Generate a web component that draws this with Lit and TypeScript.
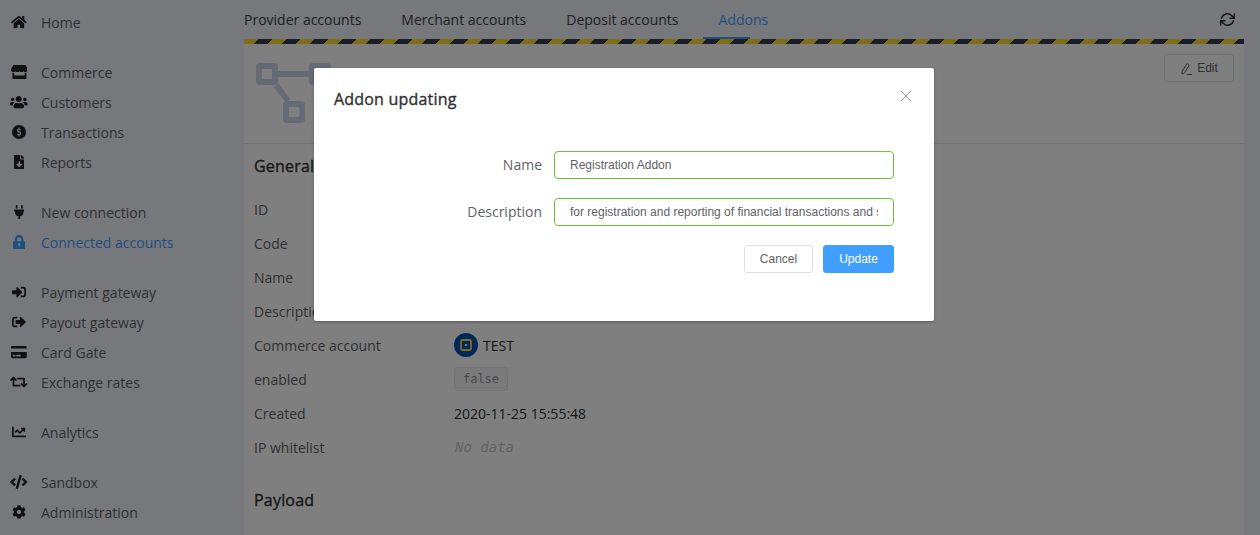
import { LitElement, html, css, svg } from "lit";
import { customElement } from "lit/decorators.js";

const ICONS: Record<string, [number, string]> = {
  home: [576, "M280.37 148.26L96 300.11V464a16 16 0 0 0 16 16l112.06-.29a16 16 0 0 0 15.92-16V368a16 16 0 0 1 16-16h64a16 16 0 0 1 16 16v95.64a16 16 0 0 0 16 16.05L464 480a16 16 0 0 0 16-16V300L295.67 148.26a12.19 12.19 0 0 0-15.3 0zM571.6 251.47L488 182.56V44.05a12 12 0 0 0-12-12h-56a12 12 0 0 0-12 12v72.61L318.47 43a48 48 0 0 0-61 0L4.34 251.47a12 12 0 0 0-1.6 16.9l25.5 31A12 12 0 0 0 45.15 301l235.22-193.74a12.19 12.19 0 0 1 15.3 0L530.9 301a12 12 0 0 0 16.9-1.6l25.5-31a12 12 0 0 0-1.7-16.93z"],
  store: [616, "M602 118.6L537.1 15C531.3 5.7 521 0 510 0H106C95 0 84.7 5.7 78.9 15L14 118.6c-33.9 54.1-3.9 129.3 59.4 137.9 4.6.6 9.2.9 13.7.9 29.9 0 56.4-13.1 74.6-33.4 18.2 20.3 44.8 33.4 74.6 33.4 29.9 0 56.4-13.1 74.6-33.4 18.2 20.3 44.8 33.4 74.6 33.4 29.9 0 56.4-13.1 74.6-33.4 18.3 20.3 44.8 33.4 74.6 33.4 4.6 0 9.1-.3 13.7-.9 63.5-8.5 93.5-83.7 59.6-137.9zM529.5 288c-10 0-19.9-1.5-29.5-3.8V384H116v-99.8c-9.6 2.2-19.5 3.8-29.5 3.8-6 0-12.1-.4-18-1.2-5.6-.8-11.1-2.1-16.4-3.6V480c0 17.7 14.3 32 32 32h448c17.7 0 32-14.3 32-32V283.2c-5.4 1.6-10.8 2.9-16.4 3.6-6.1.8-12.1 1.2-18.2 1.2z"],
  users: [640, "M96 224c35.3 0 64-28.7 64-64s-28.7-64-64-64-64 28.7-64 64 28.7 64 64 64zm448 0c35.3 0 64-28.7 64-64s-28.7-64-64-64-64 28.7-64 64 28.7 64 64 64zm32 32h-64c-17.6 0-33.5 7.1-45.1 18.6 40.3 22.1 68.9 62 75.1 109.4h66c17.7 0 32-14.3 32-32v-32c0-35.3-28.7-64-64-64zm-256 0c61.9 0 112-50.1 112-112S381.9 32 320 32 208 82.1 208 144s50.1 112 112 112zm76.8 32h-8.3c-20.8 10-43.9 16-68.5 16s-47.6-6-68.5-16h-8.3C179.6 288 128 339.6 128 403.2V432c0 26.5 21.5 48 48 48h288c26.5 0 48-21.5 48-48v-28.8c0-63.6-51.6-115.2-115.2-115.2zm-223.7-13.4C161.5 263.1 145.6 256 128 256H64c-35.3 0-64 28.7-64 64v32c0 17.7 14.3 32 32 32h65.9c6.3-47.4 34.9-87.3 75.2-109.4z"],
  file: [384, "M224 136V0H24C10.7 0 0 10.7 0 24v464c0 13.3 10.7 24 24 24h336c13.3 0 24-10.7 24-24V160H248c-13.2 0-24-10.8-24-24zm76.45 211.36l-96.42 95.7c-6.65 6.61-17.39 6.61-24.04 0l-96.42-95.7C73.42 337.29 80.54 320 94.82 320H160v-80c0-8.84 7.16-16 16-16h32c8.84 0 16 7.16 16 16v80h65.18c14.28 0 21.4 17.29 11.27 27.36zM377 105L279.1 7c-4.5-4.5-10.6-7-17-7H256v128h128v-6.1c0-6.3-2.5-12.4-7-16.9z"],
  plug: [384, "M320,32a32,32,0,0,0-64,0v96h64Zm48,128H16A16,16,0,0,0,0,176v32a16,16,0,0,0,16,16H32v32A160.07,160.07,0,0,0,160,412.8V512h64V412.8A160.07,160.07,0,0,0,352,256V224h16a16,16,0,0,0,16-16V176A16,16,0,0,0,368,160ZM128,32a32,32,0,0,0-64,0v96h64Z"],
  lock: [448, "M400 224h-24v-72C376 68.2 307.8 0 224 0S72 68.2 72 152v72H48c-26.5 0-48 21.5-48 48v192c0 26.5 21.5 48 48 48h352c26.5 0 48-21.5 48-48V272c0-26.5-21.5-48-48-48zm-104 0H152v-72c0-39.7 32.3-72 72-72s72 32.3 72 72v72zM224 300a44 44 0 0 0-24 81v35h48v-35a44 44 0 0 0-24-81z"],
  signin: [512, "M416 448h-84c-6.6 0-12-5.4-12-12v-40c0-6.6 5.4-12 12-12h84c17.7 0 32-14.3 32-32V160c0-17.7-14.3-32-32-32h-84c-6.6 0-12-5.4-12-12V76c0-6.6 5.4-12 12-12h84c53 0 96 43 96 96v192c0 53-43 96-96 96zm-47-201L201 79c-15-15-41-4.5-41 17v96H24c-13.3 0-24 10.7-24 24v96c0 13.3 10.7 24 24 24h136v96c0 21.5 26 32 41 17l168-168c9.3-9.4 9.3-24.6 0-34z"],
  signout: [512, "M497 273L329 441c-15 15-41 4.5-41-17v-96H152c-13.3 0-24-10.7-24-24v-96c0-13.3 10.7-24 24-24h136V88c0-21.4 25.9-32 41-17l168 168c9.3 9.4 9.3 24.6 0 34zM192 436v-40c0-6.6-5.4-12-12-12H96c-17.7 0-32-14.3-32-32V160c0-17.7 14.3-32 32-32h84c6.6 0 12-5.4 12-12V76c0-6.6-5.4-12-12-12H96c-53 0-96 43-96 96v192c0 53 43 96 96 96h84c6.6 0 12-5.4 12-12z"],
  card: [576, "M0 432c0 26.5 21.5 48 48 48h480c26.5 0 48-21.5 48-48V256H0v176zm192-68c0-6.6 5.4-12 12-12h136c6.6 0 12 5.4 12 12v40c0 6.6-5.4 12-12 12H204c-6.6 0-12-5.4-12-12v-40zm-128 0c0-6.6 5.4-12 12-12h72c6.6 0 12 5.4 12 12v40c0 6.6-5.4 12-12 12H76c-6.6 0-12-5.4-12-12v-40zM576 80v48H0V80c0-26.5 21.5-48 48-48h480c26.5 0 48 21.5 48 48z"],
  retweet: [640, "M629.657 343.598L528.971 444.284c-9.373 9.372-24.568 9.372-33.941 0L394.343 343.598c-9.373-9.373-9.373-24.569 0-33.941l10.823-10.823c9.562-9.562 25.133-9.34 34.419.492L480 342.118V160H292.451a24.005 24.005 0 0 1-16.971-7.029l-16-16C244.361 121.851 255.069 96 276.451 96H520c13.255 0 24 10.745 24 24v222.118l40.416-42.792c9.285-9.831 24.856-10.054 34.419-.492l10.823 10.823c9.372 9.372 9.372 24.569-.001 33.941zm-265.138 15.431A23.999 23.999 0 0 0 347.548 352H160V169.881l40.416 42.792c9.286 9.831 24.856 10.054 34.419.491l10.822-10.822c9.373-9.373 9.373-24.569 0-33.941L144.971 67.716c-9.373-9.373-24.569-9.373-33.941 0L10.343 168.402c-9.373 9.373-9.373 24.569 0 33.941l10.822 10.822c9.562 9.562 25.133 9.34 34.419-.491L96 169.881V392c0 13.255 10.745 24 24 24h243.549c21.382 0 32.09-25.851 16.971-40.971l-16.001-16z"],
  chart: [512, "M496 384H64V80c0-8.84-7.16-16-16-16H16C7.16 64 0 71.16 0 80v336c0 17.67 14.33 32 32 32h464c8.84 0 16-7.16 16-16v-32c0-8.84-7.16-16-16-16zM464 96H345.94c-21.38 0-32.09 25.85-16.97 40.97l32.4 32.4L288 242.75l-73.37-73.37c-12.5-12.5-32.76-12.5-45.25 0l-68.69 68.69c-6.25 6.25-6.25 16.38 0 22.63l22.62 22.62c6.25 6.25 16.38 6.25 22.63 0L192 237.25l73.37 73.37c12.5 12.5 32.76 12.5 45.25 0l96-96 32.4 32.4c15.12 15.12 40.97 4.41 40.97-16.97V112c.01-8.84-7.15-16-16-16z"],
  code: [640, "M278.9 511.5l-61-17.7c-6.4-1.8-10-8.5-8.2-14.9L346.2 8.7c1.8-6.4 8.5-10 14.9-8.2l61 17.7c6.4 1.8 10 8.5 8.2 14.9L293.8 503.3c-1.9 6.4-8.5 10.1-14.9 8.2zm-114-112.2l43.5-46.4c4.6-4.9 4.3-12.7-.8-17.2L117 256l90.6-79.7c5.1-4.5 5.5-12.3.8-17.2l-43.5-46.4c-4.5-4.8-12.1-5.1-17-.5L3.8 247.2c-5.1 4.7-5.1 12.8 0 17.5l144.1 135.1c4.9 4.6 12.5 4.4 17-.5zm327.2.6l144.1-135.1c5.1-4.7 5.1-12.8 0-17.5L492.1 112.1c-4.8-4.5-12.4-4.3-17 .5L431.6 159c-4.6 4.9-4.3 12.7.8 17.2L523 256l-90.6 79.7c-5.1 4.5-5.5 12.3-.8 17.2l43.5 46.4c4.5 4.9 12.1 5.1 17 .6z"],
  cog: [512, "M487.4 315.7l-42.6-24.6c4.3-23.2 4.3-47 0-70.2l42.6-24.6c4.9-2.8 7.1-8.6 5.5-14-11.1-35.6-30-67.8-54.7-94.6-3.8-4.1-10-5.1-14.8-2.3L380.8 110c-17.9-15.4-38.5-27.3-60.8-35.1V25.8c0-5.6-3.9-10.5-9.4-11.7-36.7-8.2-74.3-7.8-109.2 0-5.5 1.2-9.4 6.1-9.4 11.7V75c-22.2 7.9-42.8 19.8-60.8 35.1L88.7 85.5c-4.9-2.8-11-1.9-14.8 2.3-24.7 26.7-43.6 58.9-54.7 94.6-1.7 5.4.6 11.2 5.5 14L67.3 221c-4.3 23.2-4.3 47 0 70.2l-42.6 24.6c-4.9 2.8-7.1 8.6-5.5 14 11.1 35.6 30 67.8 54.7 94.6 3.8 4.1 10 5.1 14.8 2.3l42.6-24.6c17.9 15.4 38.5 27.3 60.8 35.1v49.2c0 5.6 3.9 10.5 9.4 11.7 36.7 8.2 74.3 7.8 109.2 0 5.5-1.2 9.4-6.1 9.4-11.7v-49.2c22.2-7.9 42.8-19.8 60.8-35.1l42.6 24.6c4.9 2.8 11 1.9 14.8-2.3 24.7-26.7 43.6-58.9 54.7-94.6 1.5-5.5-.7-11.3-5.6-14.1zM256 336c-44.1 0-80-35.9-80-80s35.9-80 80-80 80 35.9 80 80-35.9 80-80 80z"],
};

const DOLLAR =
  "M209.2 233.4l-108-31.6C88.7 198.2 80 186.5 80 173.5c0-16.3 13.2-29.5 29.5-29.5h66.3c12.2 0 24.2 3.7 34.2 10.5 6.1 4.1 14.3 3.1 19.5-2l34.8-34c7.1-6.9 6.1-18.4-1.8-24.5C238 74.8 207.4 64.1 176 64V16c0-8.8-7.2-16-16-16h-32c-8.8 0-16 7.2-16 16v48h-2.5C45.8 64-5.4 118.7.5 183.6c4.2 46.1 39.4 83.6 83.8 96.6l102.5 30c12.5 3.7 21.2 15.3 21.2 28.3 0 16.3-13.2 29.5-29.5 29.5h-66.3C100 368 88 364.3 78 357.5c-6.1-4.1-14.3-3.1-19.5 2l-34.8 34c-7.1 6.9-6.1 18.4 1.8 24.5 24.5 19.2 55.1 29.9 86.5 30v48c0 8.8 7.2 16 16 16h32c8.8 0 16-7.2 16-16v-48.2c46.6-.9 90.3-28.6 105.7-72.7 21.5-61.6-14.6-124.8-72.5-141.7z";

const icon = (name: string) => {
  if (name === "dollar") {
    return html`<svg class="ic" width="14" height="14" viewBox="0 0 496 496">
      <circle cx="248" cy="248" r="248" fill="currentColor"></circle>
      <g transform="translate(176 92) scale(.5 .61)"><path fill="#ecf0f8" d=${DOLLAR}></path></g>
    </svg>`;
  }
  const [w, d] = ICONS[name];
  return html`<svg class="ic" height="14" width=${(14 * w) / 512} viewBox="0 0 ${w} 512">
    <path fill="currentColor" fill-rule="evenodd" d=${d}></path>
  </svg>`;
};

const NAV: { icon: string; label: string; active?: boolean }[][] = [
  [{ icon: "home", label: "Home" }],
  [
    { icon: "store", label: "Commerce" },
    { icon: "users", label: "Customers" },
    { icon: "dollar", label: "Transactions" },
    { icon: "file", label: "Reports" },
  ],
  [
    { icon: "plug", label: "New connection" },
    { icon: "lock", label: "Connected accounts", active: true },
  ],
  [
    { icon: "signin", label: "Payment gateway" },
    { icon: "signout", label: "Payout gateway" },
    { icon: "card", label: "Card Gate" },
    { icon: "retweet", label: "Exchange rates" },
  ],
  [{ icon: "chart", label: "Analytics" }],
  [
    { icon: "code", label: "Sandbox" },
    { icon: "cog", label: "Administration" },
  ],
];

const TABS = ["Provider accounts", "Merchant accounts", "Deposit accounts", "Addons"];

@customElement("app-root")
export class AppRoot extends LitElement {
  static styles = css`
    :host {
      display: block;
      width: 1260px;
      height: 535px;
      position: relative;
      overflow: hidden;
      font-family: "Open Sans", sans-serif;
      font-size: 14px;
      color: #303133;
      background: #ecf0f8;
    }
    .layout { display: flex; height: 535px; }
    .side {
      width: 244px;
      flex: none;
      padding-top: 7px;
      display: flex;
      flex-direction: column;
      gap: 20px;
      box-sizing: border-box;
    }
    .item {
      height: 30px;
      display: flex;
      align-items: center;
      color: #606266;
    }
    .item.active, .item.active .slot { color: #3f9cff; }
    .slot {
      width: 38px;
      margin-right: 3px;
      display: flex;
      justify-content: center;
      color: #222;
      flex: none;
    }
    .ic { display: block; }
    .main { width: 1016px; flex: none; padding-right: 16px; box-sizing: border-box; }
    .tabs {
      height: 39px;
      display: flex;
      align-items: center;
      justify-content: space-between;
    }
    .tablist { display: flex; gap: 40px; }
    .tab { position: relative; line-height: 39px; color: #606266; }
    .tab.dark { color: #404145; }
    .tab.active { color: #3f9cff; }
    .bar {
      position: absolute;
      left: -16px;
      bottom: 0;
      width: 47px;
      height: 2px;
      background: #3f9cff;
    }
    .refresh { margin-right: 9px; color: #222; display: block; }
    .stripes {
      height: 5px;
      background: repeating-linear-gradient(135deg, #ffdb2e 0 9.9px, #363a52 9.9px 19.8px);
    }
    .card { background: #fff; height: 491px; }
    .head {
      height: 100px;
      box-sizing: border-box;
      border-bottom: 1px solid #e6e6e6;
      padding: 10px 10px 0 12px;
      display: flex;
      justify-content: space-between;
      align-items: flex-start;
    }
    .logo { display: block; margin-top: 9px; }
    .edit {
      width: 70px;
      height: 28px;
      box-sizing: border-box;
      border: 1px solid #dcdfe6;
      border-radius: 3px;
      background: #fff;
      color: #606266;
      font: 12px "Liberation Sans", sans-serif;
      display: flex;
      align-items: center;
      justify-content: center;
      gap: 5px;
      padding: 0;
    }
    .body { padding: 0 10px; }
    h3 {
      margin: 0;
      font-size: 16px;
      font-weight: 400;
      letter-spacing: 0.2px;
      -webkit-text-stroke: 0.35px currentColor;
      line-height: 22px;
    }
    .general { padding-top: 11px; padding-bottom: 15px; }
    .row { height: 34px; display: flex; align-items: center; }
    .k { width: 200px; flex: none; color: #606266; }
    .v { display: flex; align-items: center; gap: 5px; }
    .tag {
      width: 54px;
      height: 24px;
      box-sizing: border-box;
      background: #f4f4f5;
      border: 1px solid #e9e9eb;
      border-radius: 3px;
      color: #909399;
      font: 12px "DejaVu Sans Mono", monospace;
      display: flex;
      align-items: center;
      justify-content: center;
    }
    .nodata {
      font: italic 14px "DejaVu Sans Mono", monospace;
      color: #c0c4cc;
      margin-left: 1px;
    }
    .payload { margin-top: 25px; }
    .overlay {
      position: absolute;
      inset: 0;
      background: rgba(0, 0, 0, 0.5);
    }
    .modal {
      position: absolute;
      left: 314px;
      top: 68px;
      width: 620px;
      height: 253px;
      background: #fff;
      border-radius: 2px;
      box-shadow: 0 1px 3px rgba(0, 0, 0, 0.3);
      box-sizing: border-box;
      padding: 20px;
    }
    .mhead { display: flex; justify-content: space-between; align-items: flex-start; }
    .mhead h3 { color: #303133; }
    .close { display: block; margin: 2px 2px 0 0; color: #909399; }
    .form {
      margin-top: 41px;
      padding-right: 20px;
      display: flex;
      flex-direction: column;
      gap: 19px;
    }
    .field { display: flex; align-items: center; gap: 12px; justify-content: flex-end; }
    .field label { color: #606266; line-height: 26px; margin-top: -1px; }
    .field input {
      width: 340px;
      height: 28px;
      box-sizing: border-box;
      border: 1px solid #67c23a;
      border-radius: 4px;
      padding: 0 15px;
      outline: none;
      font: 12px "Liberation Sans", sans-serif;
      color: #606266;
      background: #fff;
    }
    .actions {
      display: flex;
      justify-content: flex-end;
      gap: 10px;
    }
    .btn {
      height: 28px;
      box-sizing: border-box;
      border-radius: 3px;
      font: 12px "Liberation Sans", sans-serif;
      padding: 0;
      text-align: center;
    }
    .cancel { width: 69px; border: 1px solid #dcdfe6; background: #fff; color: #606266; }
    .update { width: 71px; border: 1px solid #409eff; background: #409eff; color: #fff; }
  `;

  render() {
    return html`
      <div class="layout">
        <nav class="side">
          ${NAV.map(
            (g) => html`<div>
              ${g.map(
                (i) => html`<div class="item ${i.active ? "active" : ""}">
                  <span class="slot">${icon(i.icon)}</span><span>${i.label}</span>
                </div>`
              )}
            </div>`
          )}
        </nav>
        <main class="main">
          <div class="tabs">
            <div class="tablist">
              ${TABS.map(
                (t, n) => html`<div class="tab ${n === 3 ? "active" : "dark"}">
                  ${t}${n === 3 ? html`<div class="bar"></div>` : ""}
                </div>`
              )}
            </div>
            <svg class="refresh" width="15" height="15" viewBox="0 0 24 24" fill="none" stroke="currentColor" stroke-width="2.3" stroke-linecap="round" stroke-linejoin="round">
              ${svg`<polyline points="23 3 23 10 16 10"></polyline>
              <polyline points="1 21 1 14 8 14"></polyline>
              <path d="M2.5 10a9.6 9.6 0 0 1 16-4.5L23 10M1 14l4.5 4.5a9.6 9.6 0 0 0 16-4.5"></path>`}
            </svg>
          </div>
          <div class="stripes"></div>
          <div class="card">
            <div class="head">
              <svg class="logo" width="76" height="60" viewBox="0 0 76 60" fill="none" stroke="#cad6ea" stroke-width="6" stroke-linejoin="round">
                ${svg`<rect x="3" y="3" width="16" height="16" rx="1"></rect>
                <rect x="56" y="3" width="16" height="16" rx="1"></rect>
                <rect x="30" y="41" width="16" height="16" rx="1"></rect>
                <path d="M22 11H53M20 22L32 38"></path>`}
              </svg>
              <button class="edit">
                <svg width="12" height="13" viewBox="0 0 12 13" fill="none" stroke="currentColor" stroke-width="1">
                  ${svg`<path d="M2 9.500L6.500 2.200a1 1 0 0 1 1.400-.3l.7.5a1 1 0 0 1 .2 1.400L4.500 10.800 2 11.800zM7 12.500h5"></path>`}
                </svg>
                Edit
              </button>
            </div>
            <div class="body">
              <h3 class="general">General</h3>
              <div class="row"><div class="k">ID</div></div>
              <div class="row"><div class="k">Code</div></div>
              <div class="row"><div class="k">Name</div></div>
              <div class="row"><div class="k">Description</div></div>
              <div class="row">
                <div class="k">Commerce account</div>
                <div class="v">
                  <svg width="24" height="24" viewBox="0 0 24 24">
                    ${svg`<circle cx="12" cy="12" r="12" fill="#0050b4"></circle>
                    <rect x="7" y="7" width="10" height="10" rx="1.500" fill="none" stroke="#ffdb2e" stroke-width="1.800"></rect>
                    <rect x="11" y="11" width="2" height="2" fill="#fff"></rect>`}
                  </svg>
                  <span>TEST</span>
                </div>
              </div>
              <div class="row"><div class="k">enabled</div><div class="tag">false</div></div>
              <div class="row"><div class="k">Created</div><div>2020-11-25 15:55:48</div></div>
              <div class="row"><div class="k">IP whitelist</div><div class="nodata">No data</div></div>
              <h3 class="payload">Payload</h3>
            </div>
          </div>
        </main>
      </div>
      <div class="overlay"></div>
      <div class="modal" role="dialog">
        <div class="mhead">
          <h3>Addon updating</h3>
          <svg class="close" width="12" height="12" viewBox="0 0 12 12" stroke="currentColor" stroke-width="1">
            ${svg`<path d="M1 1L11 11M11 1L1 11"></path>`}
          </svg>
        </div>
        <div class="form">
          <div class="field">
            <label>Name</label>
            <input .value=${"Registration Addon"} />
          </div>
          <div class="field">
            <label>Description</label>
            <input .value=${"for registration and reporting of financial transactions and settlements"} />
          </div>
          <div class="actions">
            <button class="btn cancel">Cancel</button>
            <button class="btn update">Update</button>
          </div>
        </div>
      </div>
    `;
  }
}
